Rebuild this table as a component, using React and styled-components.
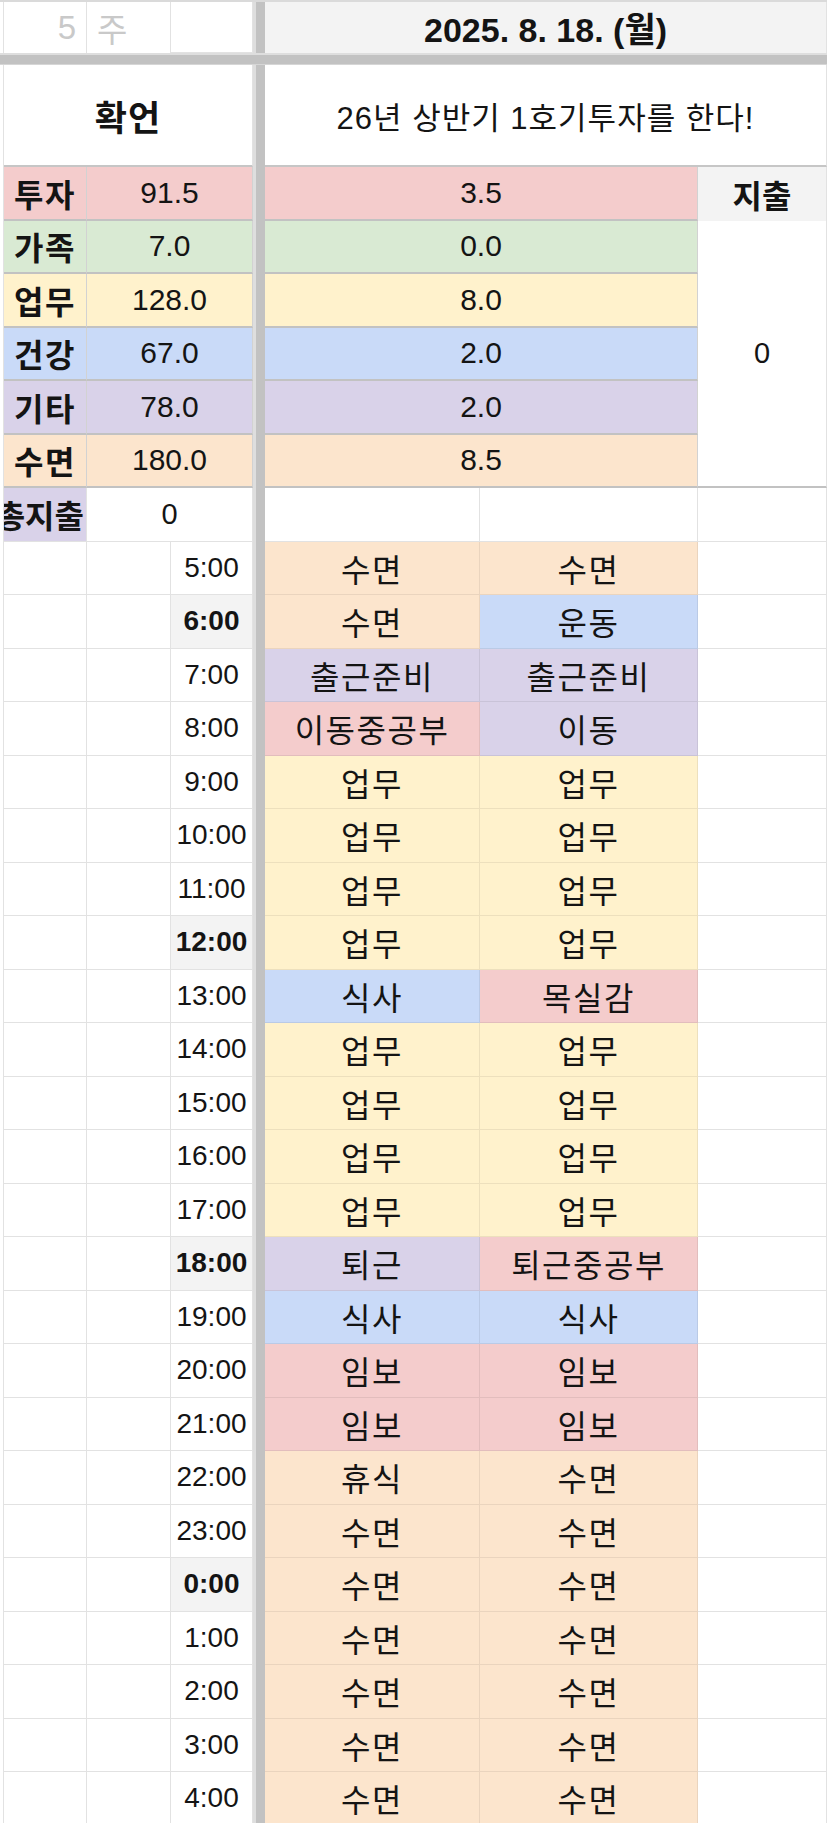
import React from 'react';
import styled, { createGlobalStyle } from 'styled-components';

const GlobalStyle = createGlobalStyle`
  html, body {
    margin: 0;
    padding: 0;
    background: #ffffff;
  }
  body {
    font-family: "Liberation Sans", "Noto Sans CJK KR", sans-serif;
    color: #141414;
  }
`;

// 카테고리 색상 (구글 시트 기본 팔레트)
const COLORS = {
  invest: '#f4cccc',
  family: '#d9ead3',
  work: '#fff2cc',
  health: '#c9daf8',
  etc: '#d9d2e9',
  sleep: '#fce5cd',
};

const ACTIVITY_COLOR = {
  '수면': COLORS.sleep,
  '휴식': COLORS.sleep,
  '운동': COLORS.health,
  '식사': COLORS.health,
  '출근준비': COLORS.etc,
  '이동': COLORS.etc,
  '퇴근': COLORS.etc,
  '업무': COLORS.work,
  '이동중공부': COLORS.invest,
  '목실감': COLORS.invest,
  '퇴근중공부': COLORS.invest,
  '임보': COLORS.invest,
};

const stats = [
  { label: '투자', total: '91.5', today: '3.5', bg: COLORS.invest },
  { label: '가족', total: '7.0', today: '0.0', bg: COLORS.family },
  { label: '업무', total: '128.0', today: '8.0', bg: COLORS.work },
  { label: '건강', total: '67.0', today: '2.0', bg: COLORS.health },
  { label: '기타', total: '78.0', today: '2.0', bg: COLORS.etc },
  { label: '수면', total: '180.0', today: '8.5', bg: COLORS.sleep },
];

const schedule = [
  ['5:00', '수면', '수면'],
  ['6:00', '수면', '운동'],
  ['7:00', '출근준비', '출근준비'],
  ['8:00', '이동중공부', '이동'],
  ['9:00', '업무', '업무'],
  ['10:00', '업무', '업무'],
  ['11:00', '업무', '업무'],
  ['12:00', '업무', '업무'],
  ['13:00', '식사', '목실감'],
  ['14:00', '업무', '업무'],
  ['15:00', '업무', '업무'],
  ['16:00', '업무', '업무'],
  ['17:00', '업무', '업무'],
  ['18:00', '퇴근', '퇴근중공부'],
  ['19:00', '식사', '식사'],
  ['20:00', '임보', '임보'],
  ['21:00', '임보', '임보'],
  ['22:00', '휴식', '수면'],
  ['23:00', '수면', '수면'],
  ['0:00', '수면', '수면'],
  ['1:00', '수면', '수면'],
  ['2:00', '수면', '수면'],
  ['3:00', '수면', '수면'],
  ['4:00', '수면', '수면'],
];

// 6시간마다 굵게 표시되는 시각
const MARK_HOURS = ['0:00', '6:00', '12:00', '18:00'];

function App() {
  return (
    <>
      <GlobalStyle />
      <Sheet>
        <LeftStrip />
        <FrozenCol />
        <FrozenRow />

        {/* 1행: 주차 + 날짜 */}
        <WeekCell $align="right">5</WeekCell>
        <WeekCell $align="left">주</WeekCell>
        <BlankCell />
        <DateHeader $span={3}>2025. 8. 18. (월)</DateHeader>

        {/* 확언 */}
        <AffirmTitle $span={3}>확언</AffirmTitle>
        <AffirmText $span={3}>26년 상반기 1호기투자를 한다!</AffirmText>

        {/* 카테고리별 누적 / 오늘 */}
        {stats.map((s, i) => (
          <React.Fragment key={s.label}>
            <StatLabel $bg={s.bg}>{s.label}</StatLabel>
            <StatValue $bg={s.bg} $span={2}>{s.total}</StatValue>
            <StatValue $bg={s.bg} $span={2}>{s.today}</StatValue>
            {i === 0 && <ExpenseTitle>지출</ExpenseTitle>}
          </React.Fragment>
        ))}
        <ExpenseValue>0</ExpenseValue>

        <TotalLabel $align="right">총지출</TotalLabel>
        <TotalValue $span={2}>0</TotalValue>
        <BlankCell />
        <BlankCell />
        <BlankCell />

        {/* 시간표 */}
        {schedule.map(([time, a, b]) => (
          <React.Fragment key={time}>
            <BlankCell />
            <BlankCell />
            <TimeCell $mark={MARK_HOURS.includes(time)}>{time}</TimeCell>
            <ActivityCell $bg={ACTIVITY_COLOR[a]}>{a}</ActivityCell>
            <ActivityCell $bg={ACTIVITY_COLOR[b]}>{b}</ActivityCell>
            <BlankCell />
          </React.Fragment>
        ))}
      </Sheet>
    </>
  );
}

export default App;

//STYLED COMPONENTS
const Sheet = styled.div`
  display: grid;
  grid-template-columns: 4px 83px 84px 82px 12px 215px 218px 129px;
  grid-template-rows: 51px 12px 102px repeat(31, 53.5px);
  width: 827px;
  height: 1823px;
  border-top: 2px solid #dadada;
  box-sizing: border-box;
  overflow: hidden;
  background: #ffffff;
`;

const LeftStrip = styled.div`
  grid-column: 1;
  grid-row: 1 / -1;
  background: #ffffff;
  border-right: 1px solid #e2e2e2;
`;

const FrozenCol = styled.div`
  grid-column: 5;
  grid-row: 1 / -1;
  background: #c2c2c2;
  border-left: 3px solid #dedede;
`;

const FrozenRow = styled.div`
  grid-column: 1 / -1;
  grid-row: 2;
  background: #c2c2c2;
  border-top: 2px solid #dedede;
  border-bottom: 1px solid #d6d6d6;
  z-index: 1;
`;

const Cell = styled.div`
  grid-column: span ${({ $span }) => $span || 1};
  display: flex;
  align-items: center;
  justify-content: ${({ $align }) =>
    $align === 'left' ? 'flex-start' : $align === 'right' ? 'flex-end' : 'center'};
  min-width: 0;
  padding: 0 10px;
  box-sizing: border-box;
  background: ${({ $bg }) => $bg || '#ffffff'};
  border-right: 1px solid #e2e2e2;
  border-bottom: 1px solid #e2e2e2;
  font-size: 28px;
  white-space: nowrap;
  overflow: hidden;
`;

const BlankCell = styled(Cell)``;

const WeekCell = styled(Cell)`
  color: #c9c9c9;
  font-size: 33px;
  border-bottom: none;
`;

const DateHeader = styled(Cell)`
  background: #f3f3f3;
  font-size: 34px;
  font-weight: 700;
  border-bottom: none;
`;

const AffirmTitle = styled(Cell)`
  font-size: 35px;
  font-weight: 700;
  letter-spacing: 1px;
  border-bottom: 2px solid #c6c6c6;
`;

const AffirmText = styled(Cell)`
  font-size: 31px;
  letter-spacing: 1px;
  border-bottom: 2px solid #c6c6c6;
`;

const StatLabel = styled(Cell)`
  padding: 0 2px;
  font-size: 32px;
  font-weight: 700;
  letter-spacing: 1.5px;
  border-right-color: #d2d2d2;
  border-bottom: 2px solid #c2c2c2;
`;

const StatValue = styled(Cell)`
  font-size: 30px;
  border-right-color: #d2d2d2;
  border-bottom: 2px solid #c2c2c2;
`;

const ExpenseTitle = styled(Cell)`
  background: #f3f3f3;
  font-size: 32px;
  font-weight: 700;
  border-bottom: none;
`;

const ExpenseValue = styled(Cell)`
  grid-column: 8;
  grid-row: 5 / span 5;
  font-size: 29px;
  border-bottom: 2px solid #c2c2c2;
`;

const TotalLabel = styled(Cell)`
  padding: 0 2px;
  background: ${COLORS.etc};
  font-size: 32px;
  font-weight: 700;
`;

const TotalValue = styled(Cell)`
  font-size: 29px;
`;

const TimeCell = styled(Cell)`
  padding: 0;
  background: ${({ $mark }) => ($mark ? '#f3f3f3' : '#ffffff')};
  font-weight: ${({ $mark }) => ($mark ? 700 : 400)};
`;

const ActivityCell = styled(Cell)`
  padding: 0 4px;
  font-size: 32px;
  letter-spacing: 1.5px;
  border-right-color: rgba(0, 0, 0, 0.07);
  border-bottom-color: rgba(0, 0, 0, 0.07);
`;
